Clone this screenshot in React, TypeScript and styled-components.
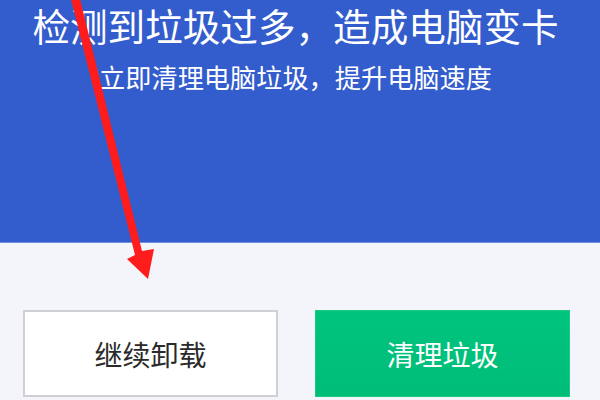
import React from "react";
import styled, { createGlobalStyle } from "styled-components";

const Global = createGlobalStyle`
  html, body { margin: 0; padding: 0; }
  body { width: 600px; height: 400px; overflow: hidden; background: #f4f5fa; }
  #root { width: 600px; height: 400px; }
`;

const Page = styled.div`
  position: relative;
  width: 600px;
  height: 400px;
  display: flex;
  flex-direction: column;
  font-family: "Noto Sans CJK SC", "Noto Sans", sans-serif;
  background: #f4f5fa;
  overflow: hidden;
`;

const Header = styled.header`
  height: 243px;
  background: #335ccc;
  border-bottom: 1px solid #6f8fe0;
  box-sizing: border-box;
  display: flex;
  flex-direction: column;
  align-items: center;
  padding: 4px 9px 0 0;
  color: #ffffff;
`;

const Title = styled.h1`
  margin: 0;
  font-size: 37.6px;
  line-height: 42px;
  font-weight: 400;
  letter-spacing: 0;
`;

const Subtitle = styled.p`
  margin: 17px 0 0 0;
  font-size: 26.2px;
  line-height: 28px;
  font-weight: 400;
`;

const Actions = styled.div`
  display: flex;
  gap: 37px;
  padding: 67px 0 0 23px;
`;

const Button = styled.button<{ $primary?: boolean }>`
  width: 255px;
  height: 87px;
  box-sizing: border-box;
  font-family: inherit;
  font-size: 28px;
  font-weight: 400;
  cursor: pointer;
  border: ${(p) => (p.$primary ? "1px solid #1bc985" : "2px solid #d0d0d4")};
  background: ${(p) => (p.$primary ? "linear-gradient(#00c47e, #00bd78)" : "#ffffff")};
  color: ${(p) => (p.$primary ? "#ffffff" : "#2a2a2a")};
  display: flex;
  align-items: center;
  justify-content: center;
  padding: 0;
`;

const ArrowLayer = styled.svg`
  position: absolute;
  left: 0;
  top: 0;
  pointer-events: none;
`;

export default function App() {
  return (
    <>
      <Global />
      <Page>
        <Header>
          <Title>检测到垃圾过多，造成电脑变卡</Title>
          <Subtitle>立即清理电脑垃圾，提升电脑速度</Subtitle>
        </Header>
        <Actions>
          <Button>继续卸载</Button>
          <Button $primary>清理垃圾</Button>
        </Actions>
        <ArrowLayer width="600" height="400" viewBox="0 0 600 400">
          <polygon
            fill="#ff1c1c"
            points="70,-5 79,-5 142,251 154,249 148,279 127,259 135,255"
          />
        </ArrowLayer>
      </Page>
    </>
  );
}
